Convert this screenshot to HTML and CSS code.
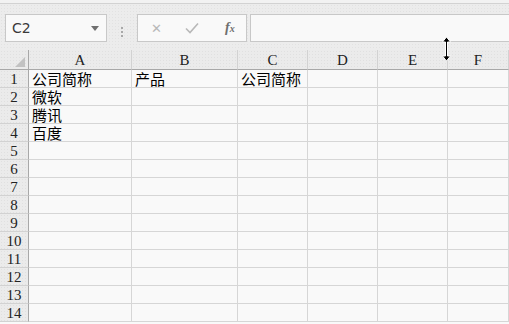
FILE: index.html
```html
<!DOCTYPE html>
<html>
<head>
    <meta charset="utf-8">
    <link rel="stylesheet" href="styles.css">
</head>
<body>
    <div class="top-strip"></div>
    <div class="toolbar">
        <div class="name-box">
            <span class="cell-ref">C2</span>
            <span class="dropdown"></span>
        </div>
        <div class="grip">
            <span></span><span></span><span></span>
        </div>
        <div class="fx-buttons">
            <span class="fx-btn cancel">&#x2715;</span>
            <span class="fx-btn enter">
                <svg width="14" height="12" viewBox="0 0 14 12"><path d="M1 6.5 L5 10.5 L13 1.5" fill="none" stroke="#b8b8b8" stroke-width="1.6"/></svg>
            </span>
            <span class="fx-btn fx">f<sub>x</sub></span>
        </div>
        <div class="formula-input"></div>
    </div>

    <div class="sheet" id="sheet">
        <div class="corner"><span class="corner-tri"></span></div>
        <div class="col-head">A</div>
        <div class="col-head">B</div>
        <div class="col-head">C</div>
        <div class="col-head">D</div>
        <div class="col-head">E</div>
        <div class="col-head">F</div>
    </div>

    <svg class="resize-cursor" width="11" height="26" viewBox="0 0 11 26">
        <path d="M5.5 1 L9.5 6 L6.5 6 L6.5 20 L9.5 20 L5.5 25 L1.5 20 L4.5 20 L4.5 6 L1.5 6 Z" fill="#000" stroke="#fff" stroke-width="1"/>
    </svg>

    <script>
        // Fill in the rows of the sheet
        const data = [
            ['公司简称', '产品', '公司简称'],
            ['微软'],
            ['腾讯'],
            ['百度']
        ];
        const sheet = document.getElementById('sheet');
        for (let r = 0; r < 14; r++) {
            const head = document.createElement('div');
            head.className = 'row-head';
            head.textContent = r + 1;
            sheet.appendChild(head);
            for (let c = 0; c < 6; c++) {
                const cell = document.createElement('div');
                cell.className = 'cell';
                cell.textContent = (data[r] && data[r][c]) || '';
                sheet.appendChild(cell);
            }
        }
    </script>
</body>
</html>
```

FILE: styles.css
```css
body {
    margin: 0;
    width: 509px;
    height: 324px;
    overflow: hidden;
    background-color: #f9f9f9;
    font-family: "Noto Sans CJK SC", sans-serif;
    position: relative;
}
.top-strip {
    height: 3px;
    background-color: #f2f2f2;
    border-bottom: 1px solid #d2d2d2;
}
.toolbar {
    height: 46px;
    box-sizing: border-box;
    padding: 10px 0 0 5px;
    display: flex;
    background-color: #ececec;
    background-image: radial-gradient(#e2e2e2 0.6px, transparent 0.7px);
    background-size: 3px 3px;
}
.name-box, .fx-buttons, .formula-input {
    height: 28px;
    box-sizing: border-box;
    border: 1px solid #c8c8c8;
    background-color: #f9f9f9;
}
.name-box {
    width: 102px;
    display: flex;
    align-items: center;
    justify-content: space-between;
    padding: 0 7px 0 6px;
}
.cell-ref {
    font-family: "DejaVu Sans", sans-serif;
    font-size: 14px;
    color: #3a3a3a;
}
.dropdown {
    width: 0;
    height: 0;
    border-left: 4px solid transparent;
    border-right: 4px solid transparent;
    border-top: 5px solid #707070;
}
.grip {
    width: 30px;
    display: flex;
    flex-direction: column;
    align-items: center;
    justify-content: center;
    gap: 2px;
}
.grip span {
    width: 2px;
    height: 2px;
    background-color: #a8a8a8;
}
.fx-buttons {
    width: 110px;
    display: flex;
    align-items: center;
    padding-left: 13px;
}
.fx-btn {
    color: #b8b8b8;
    font-family: "DejaVu Sans", sans-serif;
    font-size: 13px;
}
.cancel {
    width: 34px;
}
.enter {
    width: 40px;
    display: flex;
}
.fx {
    font-family: "Liberation Serif", serif;
    font-style: italic;
    font-size: 14px;
    color: #6e6e6e;
    font-weight: bold;
}
.fx sub {
    font-size: 10px;
    vertical-align: 0;
}
.formula-input {
    flex: 1;
    margin-left: 3px;
    border-right: none;
}
.sheet {
    display: grid;
    grid-template-columns: 29px 103px 106px 70px 70px 70px 1fr;
    grid-auto-rows: 18px;
    grid-template-rows: 20px;
}
.corner, .col-head, .row-head {
    background-color: #ebebeb;
    background-image: radial-gradient(#e0e0e0 0.6px, transparent 0.7px);
    background-size: 3px 3px;
    font-family: "Liberation Serif", serif;
    font-size: 15px;
    color: #222;
    box-sizing: border-box;
}
.corner {
    border-right: 1px solid #a8a8a8;
    border-bottom: 1px solid #a8a8a8;
    position: relative;
}
.corner-tri {
    position: absolute;
    right: 3px;
    bottom: 2px;
    width: 0;
    height: 0;
    border-left: 10px solid transparent;
    border-bottom: 10px solid #c2c2c2;
}
.col-head {
    border-right: 1px solid #d2d2d2;
    border-bottom: 1px solid #a8a8a8;
    text-align: center;
    line-height: 20px;
}
.row-head {
    border-right: 1px solid #a8a8a8;
    border-bottom: 1px solid #d2d2d2;
    text-align: center;
    line-height: 19px;
}
.cell {
    box-sizing: border-box;
    border-right: 1px solid #d6d6d6;
    border-bottom: 1px solid #d6d6d6;
    padding-left: 3px;
    font-size: 15px;
    line-height: 18px;
    color: #000;
    white-space: nowrap;
}
.resize-cursor {
    position: absolute;
    left: 441px;
    top: 36px;
}
```
